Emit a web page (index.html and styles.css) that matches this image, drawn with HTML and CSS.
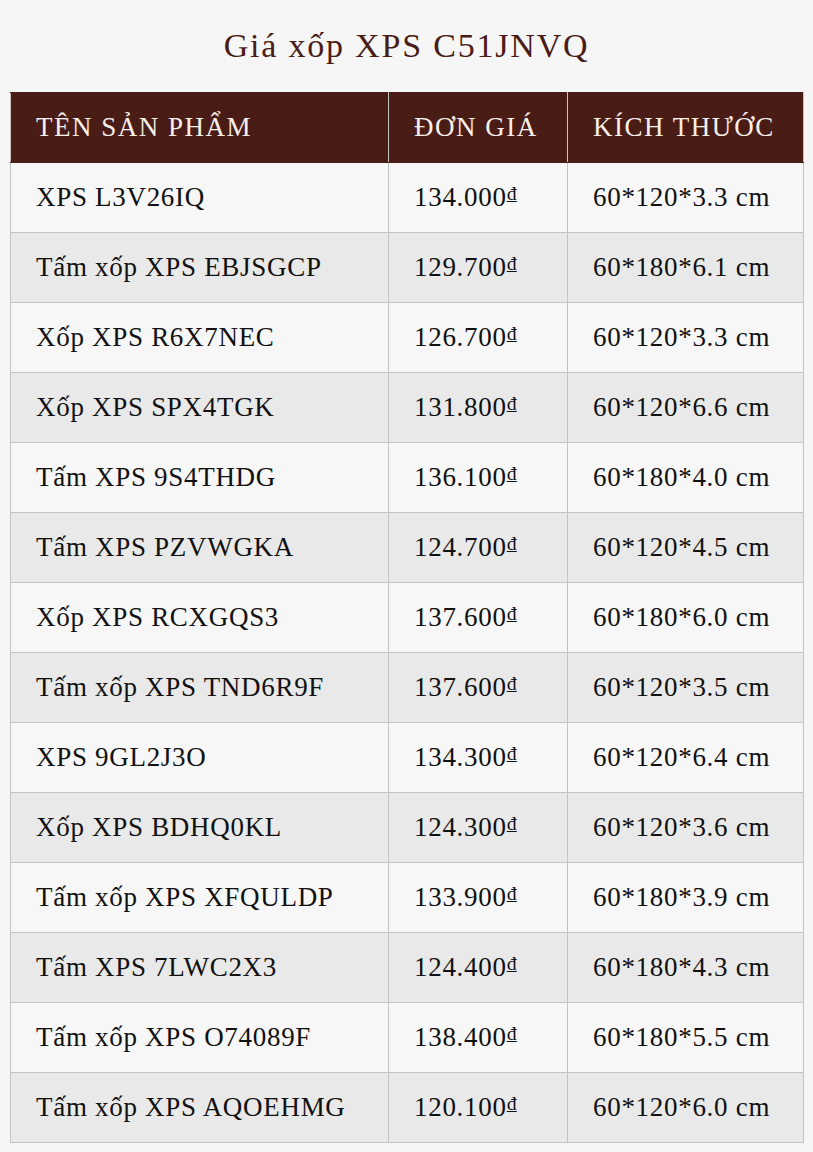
FILE: index.html
```html
<!DOCTYPE html>
<html lang="vi">
<head>
<meta charset="utf-8">
<title>Giá xốp XPS C51JNVQ</title>
<link rel="stylesheet" href="styles.css">
</head>
<body>
<h1 class="title">Giá xốp XPS C51JNVQ</h1>
<table class="price-table">
  <colgroup><col class="c-name"><col class="c-price"><col class="c-size"></colgroup>
  <thead>
    <tr><th>TÊN SẢN PHẨM</th><th>ĐƠN GIÁ</th><th>KÍCH THƯỚC</th></tr>
  </thead>
  <tbody>
    <tr><td>XPS L3V26IQ</td><td>134.000<span class="cur">₫</span></td><td>60*120*3.3 cm</td></tr>
    <tr><td>Tấm xốp XPS EBJSGCP</td><td>129.700<span class="cur">₫</span></td><td>60*180*6.1 cm</td></tr>
    <tr><td>Xốp XPS R6X7NEC</td><td>126.700<span class="cur">₫</span></td><td>60*120*3.3 cm</td></tr>
    <tr><td>Xốp XPS SPX4TGK</td><td>131.800<span class="cur">₫</span></td><td>60*120*6.6 cm</td></tr>
    <tr><td>Tấm XPS 9S4THDG</td><td>136.100<span class="cur">₫</span></td><td>60*180*4.0 cm</td></tr>
    <tr><td>Tấm XPS PZVWGKA</td><td>124.700<span class="cur">₫</span></td><td>60*120*4.5 cm</td></tr>
    <tr><td>Xốp XPS RCXGQS3</td><td>137.600<span class="cur">₫</span></td><td>60*180*6.0 cm</td></tr>
    <tr><td>Tấm xốp XPS TND6R9F</td><td>137.600<span class="cur">₫</span></td><td>60*120*3.5 cm</td></tr>
    <tr><td>XPS 9GL2J3O</td><td>134.300<span class="cur">₫</span></td><td>60*120*6.4 cm</td></tr>
    <tr><td>Xốp XPS BDHQ0KL</td><td>124.300<span class="cur">₫</span></td><td>60*120*3.6 cm</td></tr>
    <tr><td>Tấm xốp XPS XFQULDP</td><td>133.900<span class="cur">₫</span></td><td>60*180*3.9 cm</td></tr>
    <tr><td>Tấm XPS 7LWC2X3</td><td>124.400<span class="cur">₫</span></td><td>60*180*4.3 cm</td></tr>
    <tr><td>Tấm xốp XPS O74089F</td><td>138.400<span class="cur">₫</span></td><td>60*180*5.5 cm</td></tr>
    <tr><td>Tấm xốp XPS AQOEHMG</td><td>120.100<span class="cur">₫</span></td><td>60*120*6.0 cm</td></tr>
  </tbody>
</table>
</body>
</html>
```

FILE: styles.css
```css
html, body {
  margin: 0;
  padding: 0;
  background: #f6f6f6;
}
body {
  padding: 0 10px;
  font-family: "Liberation Serif", "Times New Roman", serif;
  color: #111;
}
.title {
  margin: 0;
  padding: 26px 0 16px;
  height: 50px;
  box-sizing: content-box;
  line-height: 40px;
  font-size: 34px;
  letter-spacing: 1.8px;
  font-weight: normal;
  color: #4a1c16;
  text-align: center;
}
.price-table {
  width: 793px;
  border-collapse: collapse;
  table-layout: fixed;
  font-size: 27px;
  letter-spacing: 0.7px;
}
.c-name { width: 378px; }
.c-price { width: 179px; }
.c-size { width: 236px; }
.price-table th,
.price-table td {
  box-sizing: border-box;
  border: 1px solid #c4c4c4;
  padding: 0 0 0 25px;
  line-height: 69px;
  height: 70px;
  text-align: left;
  white-space: nowrap;
  overflow: hidden;
}
.price-table th {
  background: #4a1c16;
  border-color: #4a1c16 #c4c4c4;
  color: #f7efe9;
  font-weight: normal;
  letter-spacing: 1.5px;
}
.price-table tbody tr:nth-child(odd) td { background: #f7f7f7; }
.price-table tbody tr:nth-child(even) td { background: #e9e9e9; }
.cur {
  font-size: 0.72em;
  line-height: 0;
  vertical-align: 0.3em;
  letter-spacing: 0;
}
```
